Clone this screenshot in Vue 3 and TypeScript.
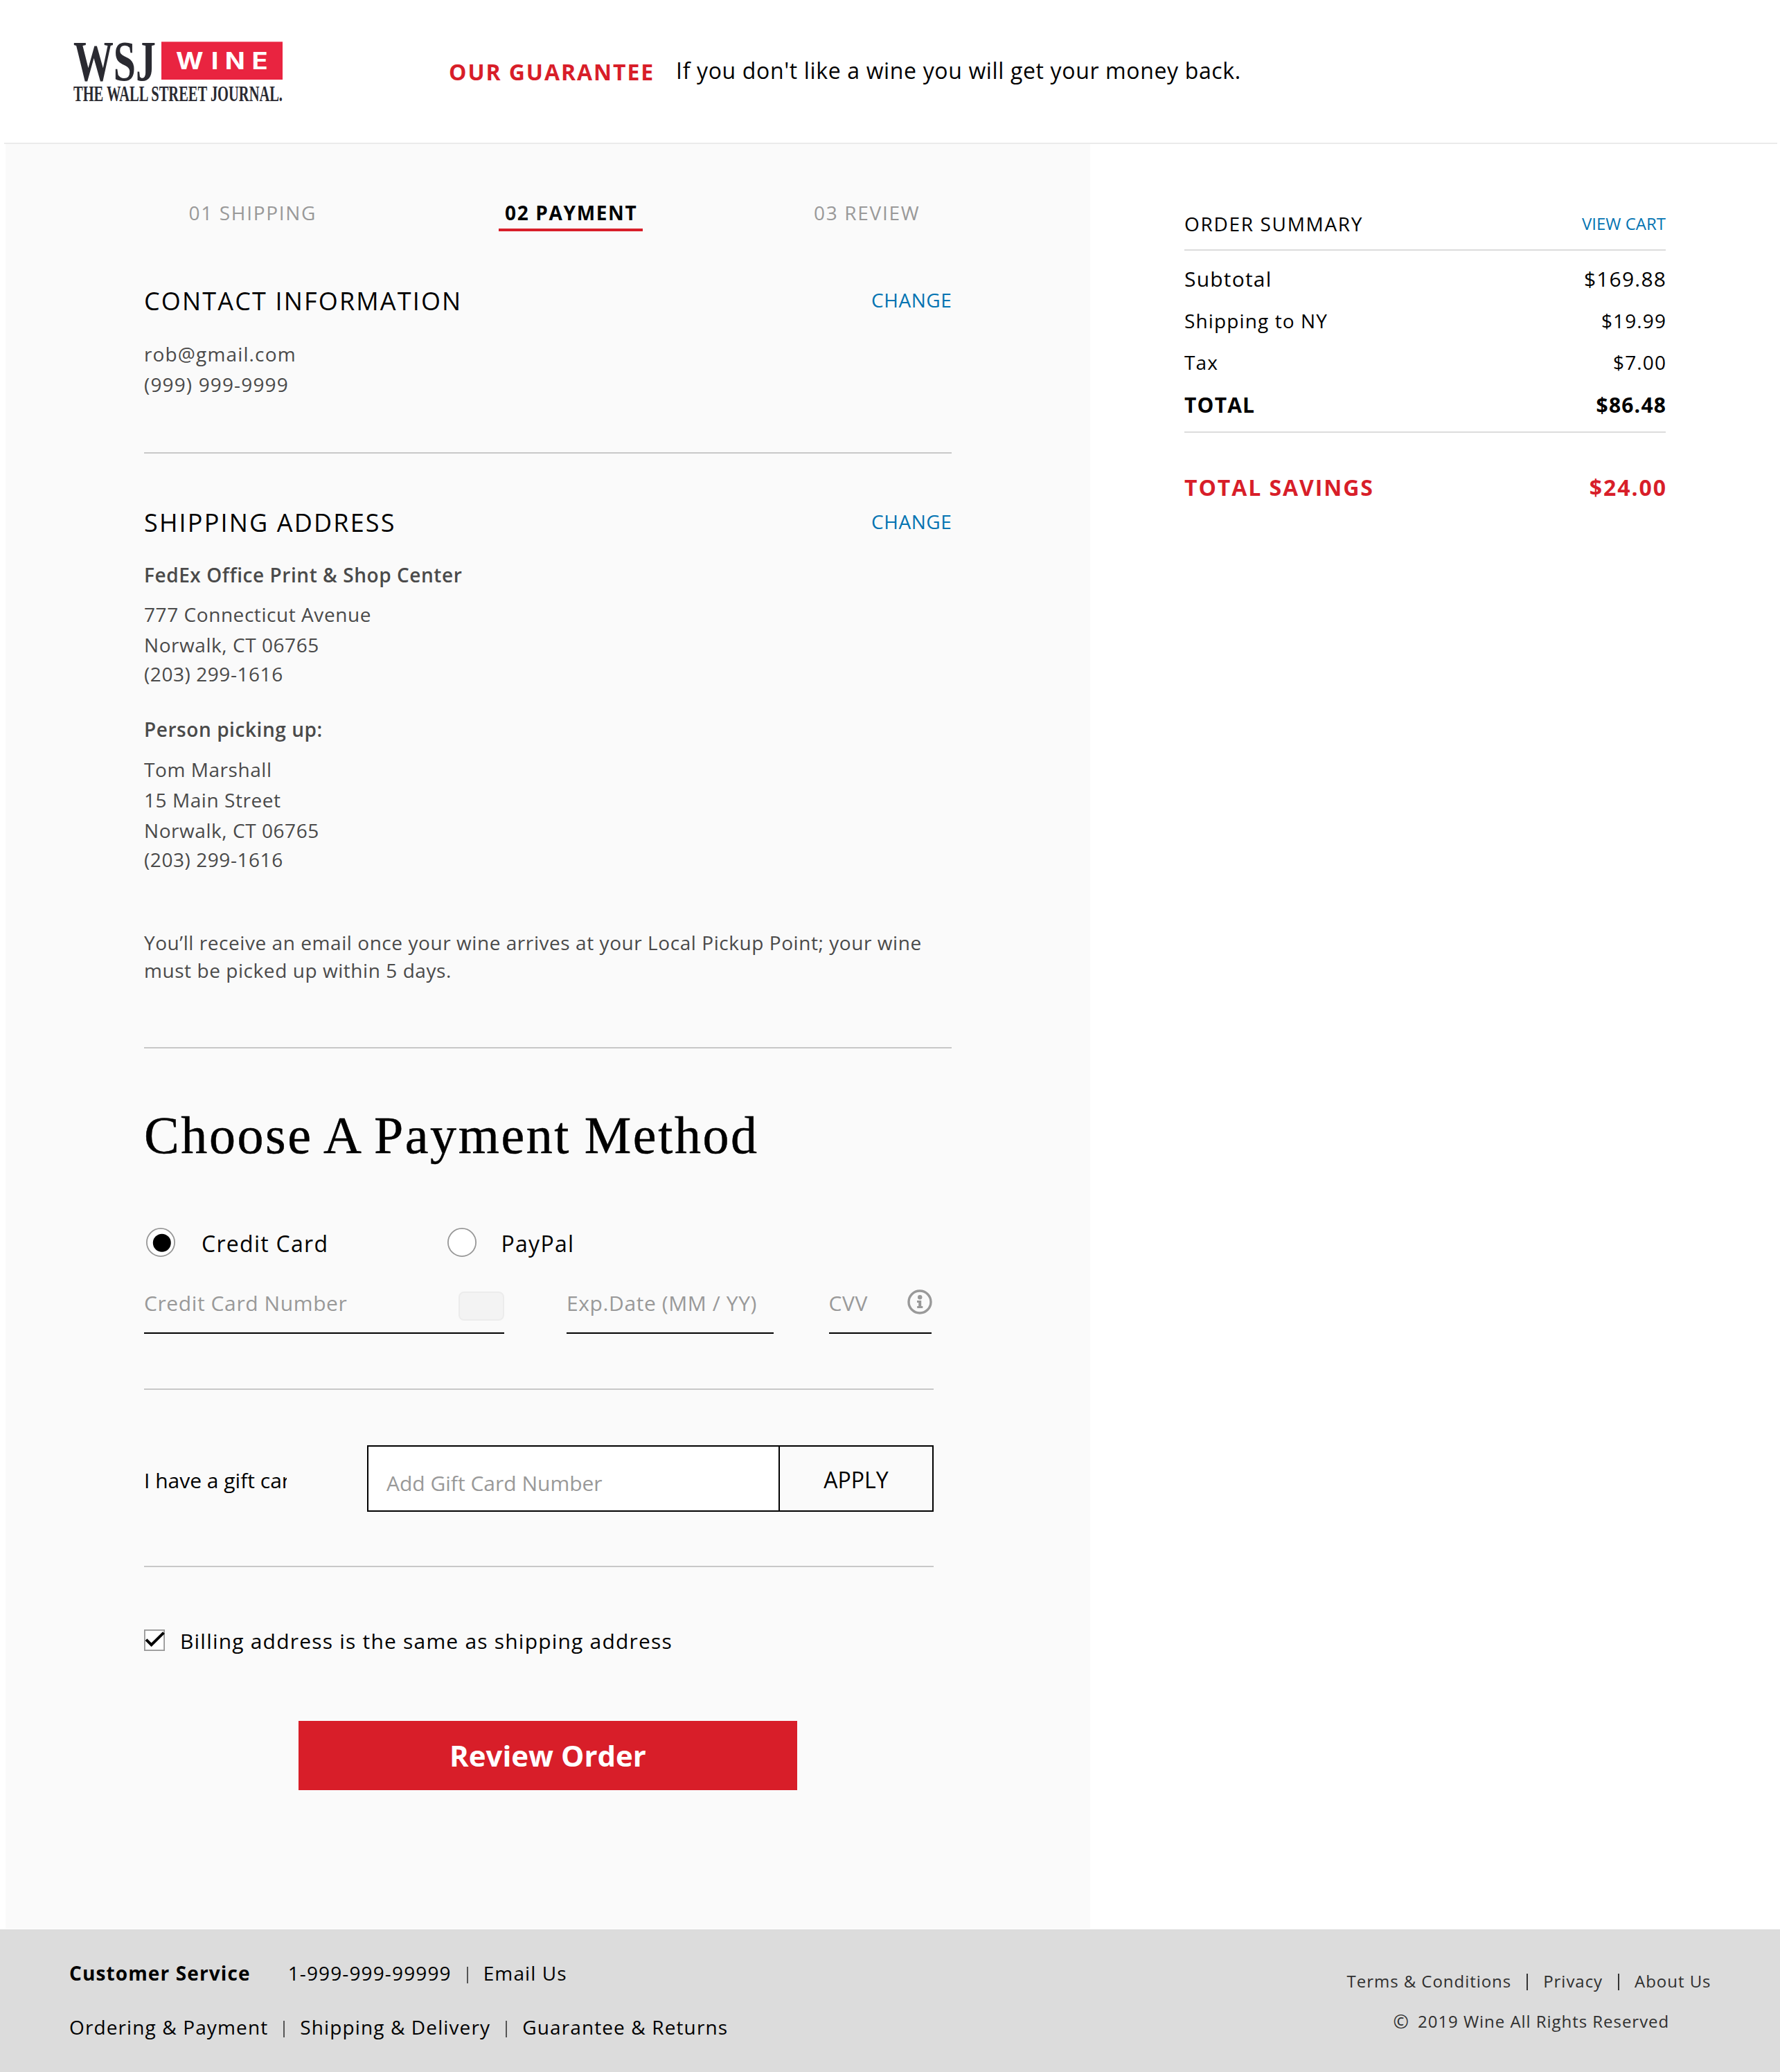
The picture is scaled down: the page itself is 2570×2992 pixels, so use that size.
<script setup lang="ts">
import { ref } from 'vue'

interface SummaryLine {
  label: string
  amount: string
  kind: 'large' | 'normal' | 'total'
}

const steps = [
  { label: '01 SHIPPING', active: false },
  { label: '02 PAYMENT', active: true },
  { label: '03 REVIEW', active: false },
]

const summary: SummaryLine[] = [
  { label: 'Subtotal', amount: '$169.88', kind: 'large' },
  { label: 'Shipping to NY', amount: '$19.99', kind: 'normal' },
  { label: 'Tax', amount: '$7.00', kind: 'normal' },
  { label: 'TOTAL', amount: '$86.48', kind: 'total' },
]

const store = ['777 Connecticut Avenue', 'Norwalk, CT 06765', '(203) 299-1616']
const person = ['Tom Marshall', '15 Main Street', 'Norwalk, CT 06765', '(203) 299-1616']

const method = ref<'card' | 'paypal'>('card')
const sameAddress = ref(true)
</script>

<template>
  <div class="page">
    <header class="header">
      <svg class="logo" width="304" height="92" viewBox="0 0 304 92" role="img" aria-label="WSJ Wine">
        <text class="logo-serif" x="0" y="55.5" font-size="83" textLength="119" lengthAdjust="spacingAndGlyphs">WSJ</text>
        <rect x="127" y="0.3" width="175" height="54.7" fill="#e92440" />
        <g transform="translate(148 40) scale(1.14 1)">
          <text class="logo-sans" x="0 44.5 62 96" y="0" font-size="33.5">WINE</text>
        </g>
        <text class="logo-serif" x="0" y="85.5" font-size="31" textLength="302" lengthAdjust="spacingAndGlyphs">THE WALL STREET JOURNAL.</text>
      </svg>
      <strong class="guarantee">OUR GUARANTEE</strong>
      <span class="promise">If you don't like a wine you will get your money back.</span>
    </header>
    <div class="header-line"></div>

    <main class="body">
      <section class="checkout">
        <nav class="steps">
          <div v-for="s in steps" :key="s.label" class="step" :class="{ active: s.active }">{{ s.label }}</div>
        </nav>

        <div class="title-row contact">
          <h2>CONTACT INFORMATION</h2>
          <a class="change">CHANGE</a>
        </div>
        <div class="lines contact-lines">
          <div>rob@gmail.com</div>
          <div class="phone">(999) 999-9999</div>
        </div>
        <div class="divider d1"></div>

        <div class="title-row shipping">
          <h2>SHIPPING ADDRESS</h2>
          <a class="change">CHANGE</a>
        </div>
        <div class="lines strong store-name">FedEx Office Print &amp; Shop Center</div>
        <div class="lines address store">
          <div v-for="l in store" :key="l">{{ l }}</div>
        </div>
        <div class="lines strong person-name">Person picking up:</div>
        <div class="lines address person">
          <div v-for="l in person" :key="l">{{ l }}</div>
        </div>
        <p class="note">You’ll receive an email once your wine arrives at your Local Pickup Point; your wine<br>must be picked up within 5 days.</p>
        <div class="divider d2"></div>

        <h1>Choose A Payment Method</h1>

        <div class="methods">
          <div class="method card" @click="method = 'card'">
            <svg width="42" height="42" viewBox="0 0 42 42">
              <circle cx="21" cy="21" r="20.1" fill="#fff" stroke="#979797" stroke-width="1.8" />
              <circle v-if="method === 'card'" cx="22.8" cy="21.8" r="13" />
            </svg>
            <span>Credit Card</span>
          </div>
          <div class="method paypal" @click="method = 'paypal'">
            <svg width="42" height="42" viewBox="0 0 42 42">
              <circle cx="21" cy="21" r="20.1" fill="#fff" stroke="#979797" stroke-width="1.8" />
              <circle v-if="method === 'paypal'" cx="22.8" cy="21.8" r="13" />
            </svg>
            <span>PayPal</span>
          </div>
        </div>

        <div class="fields">
          <div class="field number">
            <span>Credit Card Number</span>
            <i class="card-chip"></i>
          </div>
          <div class="field date"><span>Exp.Date (MM / YY)</span></div>
          <div class="field cvv">
            <span>CVV</span>
            <svg class="info" width="36" height="36" viewBox="0 0 36 36">
              <circle cx="18" cy="18" r="16" fill="none" stroke="#999" stroke-width="3.4" />
              <circle cx="18.2" cy="11.2" r="3.2" fill="#999" />
              <path d="M14 16h6.2v8h2.1v3h-8.1v-3h2v-5h-2.2z" fill="#999" />
            </svg>
          </div>
        </div>
        <div class="divider narrow d3"></div>

        <div class="gift">
          <span class="gift-label">I have a gift card</span>
          <div class="gift-box">
            <div class="gift-input">Add Gift Card Number</div>
            <div class="apply">APPLY</div>
          </div>
        </div>
        <div class="divider narrow d4"></div>

        <div class="billing" @click="sameAddress = !sameAddress">
          <svg width="30" height="31" viewBox="0 0 30 31">
            <rect x="0.9" y="0.9" width="28.2" height="29.2" fill="#fff" stroke="#979797" stroke-width="1.8" />
            <path v-if="sameAddress" d="M3 14.6l7.6 7.6L28.4 4.6" fill="none" stroke="#000" stroke-width="4" />
          </svg>
          <span>Billing address is the same as shipping address</span>
        </div>

        <button class="review" type="button">Review Order</button>
      </section>

      <aside class="summary">
        <div class="summary-head">
          <span class="summary-title">ORDER SUMMARY</span>
          <a class="view-cart">VIEW CART</a>
        </div>
        <div class="summary-lines">
          <div v-for="l in summary" :key="l.label" class="summary-line" :class="l.kind">
            <span>{{ l.label }}</span>
            <span class="amount">{{ l.amount }}</span>
          </div>
        </div>
        <div class="savings">
          <span>TOTAL SAVINGS</span>
          <span class="amount">$24.00</span>
        </div>
      </aside>
    </main>

    <footer class="footer">
      <div class="foot-left">
        <div class="foot-row">
          <strong>Customer Service</strong>
          <span class="foot-phone">1-999-999-99999</span>
          <i></i>
          <span>Email Us</span>
        </div>
        <div class="foot-row second">
          <span>Ordering &amp; Payment</span>
          <i></i>
          <span>Shipping &amp; Delivery</span>
          <i></i>
          <span>Guarantee &amp; Returns</span>
        </div>
      </div>
      <div class="foot-right">
        <div class="legal">
          <span>Terms &amp; Conditions</span>
          <i></i>
          <span>Privacy</span>
          <i></i>
          <span>About Us</span>
        </div>
        <div class="copyright"><span class="mark">©</span><span>2019 Wine All Rights Reserved</span></div>
      </div>
    </footer>
  </div>
</template>

<style>
body {
  margin: 0;
  background: #fff;
}
</style>

<style scoped>
.page {
  width: 2570px;
  height: 2992px;
  overflow: hidden;
  font-family: "Open Sans", "Noto Sans", sans-serif;
  font-size: 28px;
  color: #000;
  white-space: nowrap;
}

.header {
  box-sizing: border-box;
  display: flex;
  align-items: flex-start;
  height: 206px;
  padding-left: 106px;
}
.logo {
  display: block;
  margin-top: 60px;
  overflow: visible;
}
.logo-serif {
  font-family: "Liberation Serif", serif;
  font-weight: 700;
  fill: #2a2a31;
}
.logo-sans {
  font-family: Inter, sans-serif;
  font-weight: 700;
  fill: #fff;
}
.guarantee {
  margin: 82px 0 0 238px;
  font-size: 32px;
  line-height: 43px;
  letter-spacing: 1.92px;
  color: #d81e29;
}
.promise {
  margin: 80px 0 0 31px;
  font-size: 32px;
  line-height: 43px;
  letter-spacing: 0.64px;
}
.header-line {
  height: 2px;
  margin: 0 4px 0 6px;
  background: #ebebeb;
}

.body {
  display: flex;
  height: 2578px;
}
.checkout {
  box-sizing: border-box;
  width: 1566px;
  height: 2577px;
  margin-left: 8px;
  padding: 79px 200px 0;
  background: #fafafa;
}
.steps {
  display: grid;
  grid-template-columns: 512px 444px auto;
  height: 47px;
}
.step {
  padding-left: 64.5px;
  line-height: 40px;
  letter-spacing: 1.68px;
  color: #999;
}
.step:last-child {
  padding-left: 11px;
}
.step.active {
  box-sizing: border-box;
  width: 208px;
  height: 47px;
  padding-left: 9px;
  border-bottom: 4px solid #d81e29;
  font-weight: 700;
  letter-spacing: 1.67px;
  color: #000;
}

.title-row {
  display: flex;
  justify-content: space-between;
  align-items: flex-start;
}
h2 {
  margin: 0;
  font-size: 36px;
  font-weight: 400;
  line-height: 51px;
  letter-spacing: 2.16px;
}
.change {
  margin: 4px -0.4px 0 0;
  line-height: 40px;
  letter-spacing: 0.56px;
  color: #0474b2;
}
.contact {
  margin-top: 75px;
}
.lines {
  line-height: 44px;
  letter-spacing: 0.56px;
  color: #4a4a4a;
}
.contact-lines {
  margin-top: 29px;
  letter-spacing: 1.14px;
}
.divider {
  height: 2px;
  background: #c8c8c8;
}
.d1 {
  margin-top: 76px;
}
.shipping {
  margin-top: 74px;
}
.strong {
  font-weight: 600;
}
.store-name {
  margin-top: 28px;
}
.store {
  margin-top: 13px;
}
.address > div:last-child {
  margin-top: -2px;
}
.person-name {
  margin-top: 36px;
}
.person {
  margin-top: 14px;
}
.note {
  margin: 78px 0 0;
  line-height: 40px;
  letter-spacing: 0.56px;
  color: #4a4a4a;
}
.d2 {
  margin-top: 91px;
}

h1 {
  margin: 80px 0 0;
  font-family: "Liberation Serif", serif;
  font-size: 76px;
  font-weight: 400;
  line-height: 90px;
  letter-spacing: 2.6px;
  word-spacing: -2px;
  -webkit-text-stroke: 0.5px #000;
}
.methods {
  display: flex;
  height: 42px;
  margin: 89px 0 0 3px;
}
.method {
  display: flex;
  font-size: 32px;
  line-height: 45px;
}
.card {
  width: 435px;
  gap: 38px;
  letter-spacing: 1.28px;
}
.paypal {
  gap: 35.5px;
  letter-spacing: 1.28px;
}
.fields {
  display: flex;
  margin-top: 47px;
}
.field {
  box-sizing: border-box;
  display: flex;
  justify-content: space-between;
  align-items: flex-start;
  height: 64px;
  border-bottom: 2px solid #000;
  font-size: 30px;
  line-height: 39px;
  letter-spacing: 0.6px;
  color: #999;
}
.number {
  width: 520px;
}
.date {
  width: 299px;
  margin-left: 90px;
}
.cvv {
  width: 148.5px;
  margin-left: 79.5px;
}
.card-chip {
  box-sizing: border-box;
  width: 66px;
  height: 42px;
  margin-top: 3px;
  border: 2px solid #ececec;
  border-radius: 8px;
  background: #f3f3f3;
}
.info {
  margin: -0.5px -0.5px 0 0;
}
.narrow {
  width: 1140px;
}
.d3 {
  margin-top: 79px;
}
.gift {
  display: flex;
  margin-top: 80px;
  font-size: 30px;
}
.gift-label {
  width: 206px;
  height: 60px;
  margin: 31px 116px 0 0;
  overflow: hidden;
  line-height: 40px;
}
.gift-box {
  box-sizing: border-box;
  display: flex;
  width: 818px;
  height: 96px;
  border: 2px solid #000;
}
.gift-input {
  box-sizing: border-box;
  width: 594px;
  padding: 33px 0 0 26px;
  border-right: 2px solid #000;
  background: #fff;
  line-height: 40px;
  color: #999;
}
.apply {
  flex: 1;
  padding-top: 28px;
  text-align: center;
  font-size: 32px;
  line-height: 40px;
}
.d4 {
  margin-top: 78px;
}
.billing {
  display: flex;
  height: 40px;
  margin-top: 87px;
  gap: 22px;
  font-size: 30px;
  line-height: 40px;
  letter-spacing: 1.2px;
}
.billing svg {
  margin-top: 3px;
}
.review {
  display: block;
  width: 720px;
  height: 100px;
  margin: 95px auto 0;
  padding: 0;
  border: 0;
  background: #d81e29;
  font: 700 42px/100px "Open Sans", sans-serif;
  color: #fff;
}

.summary {
  width: 695px;
  padding: 95px 0 0 136px;
}
.summary-head {
  display: flex;
  justify-content: space-between;
  line-height: 40px;
  padding-bottom: 17px;
  border-bottom: 2px solid #dcdcdc;
}
.summary-title {
  letter-spacing: 1.68px;
}
.view-cart {
  font-size: 24px;
  color: #0474b2;
}
.summary-lines {
  padding: 11px 0 7px;
  border-bottom: 2px solid #dcdcdc;
}
.summary-line {
  display: flex;
  justify-content: space-between;
  height: 60px;
  line-height: 60px;
  letter-spacing: 1.12px;
}
.amount {
  margin-right: -1.1px;
}
.large {
  font-size: 30px;
  letter-spacing: 1.2px;
}
.total {
  height: 63px;
  font-size: 30px;
  font-weight: 700;
  line-height: 63px;
  letter-spacing: 1.2px;
}
.savings {
  display: flex;
  justify-content: space-between;
  margin-top: 49px;
  font-size: 32px;
  font-weight: 700;
  line-height: 60px;
  letter-spacing: 1.92px;
  color: #d81e29;
}
.savings .amount {
  margin-right: -1.9px;
}

.footer {
  box-sizing: border-box;
  display: flex;
  justify-content: space-between;
  height: 206px;
  padding: 43px 99.5px 0 100px;
  background: #dcdcdc;
}
.foot-row {
  display: flex;
  gap: 22px;
  line-height: 40px;
  letter-spacing: 1.12px;
}
.second {
  margin-top: 38px;
}
.foot-phone {
  margin-left: 32px;
}
.foot-row i {
  width: 2px;
  height: 24px;
  margin-top: 11px;
  background: #555;
}
.foot-right {
  padding-top: 12px;
  font-size: 24px;
  line-height: 40px;
  letter-spacing: 0.96px;
  color: #2f2f2f;
}
.legal {
  display: flex;
  gap: 22px;
}
.legal i {
  width: 2px;
  height: 24px;
  margin-top: 9px;
  background: #333;
}
.copyright {
  display: flex;
  gap: 12px;
  margin: 18px 0 0 67px;
}
.mark {
  font-size: 27px;
}
</style>
